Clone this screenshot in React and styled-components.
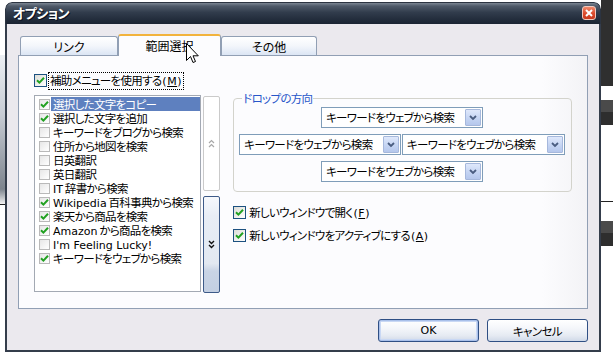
import React from "react";
import styled, { createGlobalStyle } from "styled-components";

const Global = createGlobalStyle`
  html, body { margin: 0; padding: 0; background: #fff; }
  body { font-family: "Noto Sans CJK JP", "Noto Sans", sans-serif; }
  * { box-sizing: border-box; }
`;

const FONT = `"Noto Sans CJK JP", "Noto Sans", sans-serif`;
const LATIN = `"DejaVu Sans", "Noto Sans CJK JP", sans-serif`;

const Desktop = styled.div`
  position: relative;
  width: 613px;
  height: 358px;
  overflow: hidden;
  background: #fff;
  display: flex;
  font-family: ${FONT};
  font-feature-settings: "palt";
`;

const LeftStrip = styled.div`
  width: 5px;
  display: flex;
  flex-direction: column;
`;

const Band = styled.div`
  height: ${(p) => p.h}px;
  background: ${(p) => p.bg};
  border-bottom: ${(p) => (p.line ? "1px solid #222" : "none")};
`;

const Middle = styled.div`
  flex: 1;
`;

const RightStrip = styled.div`
  width: 12px;
  display: flex;
  flex-direction: column;
`;

const Window = styled.div`
  position: absolute;
  left: 5px;
  top: 2px;
  width: 596px;
  height: 350px;
  display: flex;
  flex-direction: column;
  border-radius: 7px 7px 0 0;
  overflow: hidden;
`;

const TitleBar = styled.div`
  height: 23px;
  display: flex;
  align-items: center;
  justify-content: space-between;
  padding: 0 4px 0 7px;
  background: linear-gradient(
    #7b8592 0%,
    #4e5968 15%,
    #313c4c 45%,
    #222c3b 80%,
    #1b2433 100%
  );
  border: 1px solid #2c3441;
  border-bottom: none;
  border-radius: 7px 7px 0 0;
`;

const Title = styled.div`
  color: #fff;
  font-weight: bold;
  font-size: 13px;
  letter-spacing: -0.6px;
  text-shadow: 1px 1px 0 #0a1020;
  margin-top: -2px;
`;

const CloseBtn = styled.div`
  width: 14px;
  height: 14px;
  border-radius: 3px;
  border: 1px solid #f2c8bd;
  background: linear-gradient(#f08a6c, #dc4a2c 55%, #c83a1e);
  display: flex;
  align-items: center;
  justify-content: center;
  margin-top: -1px;
`;

const Body = styled.div`
  flex: 1;
  background: #ebe9ee;
  border: 2px solid #343d4b;
  border-top: none;
  padding: 10px 11px 8px 11px;
  display: flex;
  flex-direction: column;
`;

const TabStrip = styled.div`
  height: 21px;
  display: flex;
  align-items: flex-end;
  padding-left: 2px;
  position: relative;
  z-index: 1;
`;

const Tab = styled.div`
  width: ${(p) => p.w}px;
  height: ${(p) => (p.active ? 22 : 19)}px;
  margin-bottom: ${(p) => (p.active ? -1 : 0)}px;
  border: 1px solid #919fb4;
  border-bottom: none;
  border-top: ${(p) => (p.active ? "2px solid #f2b33d" : "1px solid #919fb4")};
  border-radius: 3px 3px 0 0;
  background: ${(p) =>
    p.active ? "#fcfcfe" : "linear-gradient(#ffffff, #f3f6fb 50%, #dbe5f4)"};
  display: flex;
  align-items: center;
  justify-content: center;
  font-size: 12px;
  color: #000;
  padding-bottom: ${(p) => (p.active ? 2 : 0)}px;
`;

const Panel = styled.div`
  height: 254px;
  border: 1px solid #919fb4;
  background: linear-gradient(90deg, #fcfcfe 92%, #f3f3f6);
  padding: 16px 15px 0 15px;
  display: flex;
  flex-direction: column;
  font-size: 11.5px;
  letter-spacing: -0.7px;
`;

const CheckLine = styled.label`
  display: flex;
  align-items: center;
  height: ${(p) => p.h || 17}px;
  color: #000;
  margin-top: ${(p) => p.mt || 0}px;
`;

const FocusText = styled.span`
  margin-left: 2px;
  padding: 0 1px;
  line-height: 15px;
  outline: ${(p) => (p.focus ? "1px dotted #000" : "none")};
`;

const Plain = styled.span`
  margin-left: 3px;
`;

const Latin = styled.span`
  font-family: ${LATIN};
  font-size: 11px;
  letter-spacing: 0;
`;

const Mnemonic = styled.span`
  font-family: ${LATIN};
  font-size: 11px;
  letter-spacing: 0.5px;
  margin-left: 1px;
  & u {
    text-decoration: underline;
  }
`;

const BoxMain = styled.span`
  width: 13px;
  height: 13px;
  border: 1px solid #1c5180;
  background: linear-gradient(135deg, #dcdcd7, #ffffff);
  display: flex;
  align-items: center;
  justify-content: center;
  flex: none;
`;

const Content = styled.div`
  margin-top: 6px;
  display: flex;
  align-items: flex-start;
`;

const ListBox = styled.div`
  width: 170px;
  height: 197px;
  border: 1px solid #a3a9b3;
  background: #fff;
  padding-top: 1px;
  display: flex;
  flex-direction: column;
`;

const ListRow = styled.div`
  height: 14px;
  display: flex;
  align-items: center;
  padding-left: 4px;
`;

const BoxSmall = styled.span`
  width: 11px;
  height: 11px;
  border: 1px solid #b9b9b9;
  background: linear-gradient(135deg, #e6e6e6, #ffffff);
  display: flex;
  align-items: center;
  justify-content: center;
  flex: none;
`;

const ItemText = styled.span`
  flex: 1;
  height: 14px;
  margin-left: 1px;
  padding-left: 2px;
  line-height: 14px;
  white-space: nowrap;
  color: ${(p) => (p.sel ? "#fff" : "#000")};
  background: ${(p) => (p.sel ? "#5e80bf" : "transparent")};
`;

const ScrollCol = styled.div`
  margin-left: 2px;
  margin-top: 1px;
  width: 17px;
  display: flex;
  flex-direction: column;
  gap: 5px;
`;

const ScrollBtn = styled.div`
  height: ${(p) => p.h}px;
  border-radius: 2px;
  border: 1px solid ${(p) => (p.pressed ? "#3d5a88" : "#cacaca")};
  background: ${(p) =>
    p.pressed
      ? "linear-gradient(#f6f8fc 0%, #e8edf5 20%, #e2e8f1 70%, #c9d4e5 78%, #c3cfe2 100%)"
      : "#fff"};
  display: flex;
  align-items: center;
  justify-content: center;
`;

const RightCol = styled.div`
  margin-left: 13px;
  width: 344px;
  display: flex;
  flex-direction: column;
`;

const Group = styled.fieldset`
  margin: -3px 0 0 0;
  height: 100px;
  border: 1px solid #d3d3cc;
  border-radius: 4px;
  padding: 3px 6px 0 5px;
  display: flex;
  flex-direction: column;
  align-items: stretch;
  gap: 6px;
`;

const Legend = styled.legend`
  margin-left: 3px;
  padding: 0 1px;
  line-height: 12px;
  color: #2756c9;
`;

const ComboRow = styled.div`
  display: flex;
  justify-content: ${(p) => (p.center ? "center" : "space-between")};
`;

const Combo = styled.div`
  width: ${(p) => p.w || 162}px;
  height: 21px;
  border: 1px solid #7f9db9;
  background: #fff;
  display: flex;
  align-items: stretch;
  padding: 1px;
`;

const ComboText = styled.span`
  flex: 1;
  line-height: 17px;
  padding-left: 3px;
  color: #000;
  white-space: nowrap;
  overflow: hidden;
`;

const ComboArrow = styled.span`
  width: 16px;
  border: 1px solid #a6b8dc;
  border-radius: 1px;
  background: linear-gradient(#dfe8fb, #c3d3f2 60%, #b5c7ec);
  display: flex;
  align-items: center;
  justify-content: center;
`;

const Footer = styled.div`
  margin-top: 10px;
  display: flex;
  justify-content: flex-end;
  gap: 8px;
`;

const Button = styled.div`
  width: ${(p) => p.w}px;
  height: 23px;
  border: 1px solid #2f4f84;
  border-radius: 3px;
  background: linear-gradient(#ffffff 0%, #f4f6fa 40%, #e5eaf2 75%, #d0d9e8 100%);
  box-shadow: ${(p) => (p.def ? "inset 0 0 0 1px #a9c0ea, inset 0 0 0 2px #c9d8f4" : "none")};
  display: flex;
  align-items: center;
  justify-content: center;
  font-size: 11.5px;
  letter-spacing: -0.6px;
  color: #000;
`;

const Cursor = styled.svg`
  position: absolute;
  left: 186px;
  top: 43px;
  z-index: 5;
`;

const Check = ({ c = "#21a121" }) => (
  <svg width="9" height="9" viewBox="0 0 9 9">
    <path d="M1 4.2 L3.4 6.6 L8 1.8" fill="none" stroke={c} strokeWidth="2" />
  </svg>
);

const items = [
  { t: "選択した文字をコピー", c: true, sel: true },
  { t: "選択した文字を追加", c: true },
  { t: "キーワードをブログから検索", c: false },
  { t: "住所から地図を検索", c: false },
  { t: "日英翻訳", c: false },
  { t: "英日翻訳", c: false },
  { t: "IT 辞書から検索", c: false, latin: "IT", rest: " 辞書から検索" },
  { t: "Wikipedia 百科事典から検索", c: true, latin: "Wikipedia", rest: " 百科事典から検索" },
  { t: "楽天から商品を検索", c: true },
  { t: "Amazon から商品を検索", c: true, latin: "Amazon", rest: " から商品を検索" },
  { t: "I'm Feeling Lucky!", c: false, latin: "I'm Feeling Lucky!", rest: "" },
  { t: "キーワードをウェブから検索", c: true },
];

const ComboBox = ({ w }) => (
  <Combo w={w}>
    <ComboText>キーワードをウェブから検索</ComboText>
    <ComboArrow>
      <svg width="8" height="6" viewBox="0 0 8 6">
        <path d="M1 1 L4 4 L7 1" fill="none" stroke="#4a5d80" strokeWidth="1.8" />
      </svg>
    </ComboArrow>
  </Combo>
);

export default function App() {
  return (
    <>
      <Global />
      <Desktop>
        <LeftStrip>
          <Band h={55} bg="#fff" />
          <Band h={150} bg="linear-gradient(#eceff3, #c7ccd4 40%, #7d848d 90%, #f2f2f2)" line />
          <Band h={152} bg="#fff" />
        </LeftStrip>
        <Middle />
        <RightStrip>
          <Band h={86} bg="#2f2f2f" />
          <Band h={14} bg="#fff" />
          <Band h={12} bg="#4a4a4a" />
          <Band h={13} bg="#2e2e2e" />
          <Band h={77} bg="#fff" line />
          <Band h={19} bg="#fff" />
          <Band h={12} bg="#4a4a4a" />
          <Band h={13} bg="#2e2e2e" />
          <Band h={112} bg="#fff" />
        </RightStrip>

        <Window>
          <TitleBar>
            <Title>オプション</Title>
            <CloseBtn>
              <svg width="8" height="8" viewBox="0 0 8 8">
                <path d="M1 1 L7 7 M7 1 L1 7" stroke="#fff" strokeWidth="2" />
              </svg>
            </CloseBtn>
          </TitleBar>
          <Body>
            <TabStrip>
              <Tab w={98}>リンク</Tab>
              <Tab w={103} active>範囲選択</Tab>
              <Tab w={96}>その他</Tab>
            </TabStrip>
            <Panel>
              <CheckLine>
                <BoxMain>
                  <Check />
                </BoxMain>
                <FocusText focus>
                  補助メニューを使用する<Mnemonic>(<u>M</u>)</Mnemonic>
                </FocusText>
              </CheckLine>
              <Content>
                <ListBox>
                  {items.map((it, i) => (
                    <ListRow key={i}>
                      <BoxSmall>{it.c && <Check />}</BoxSmall>
                      <ItemText sel={it.sel}>
                        {it.latin !== undefined ? (
                          <>
                            <Latin>{it.latin}</Latin>
                            {it.rest}
                          </>
                        ) : (
                          it.t
                        )}
                      </ItemText>
                    </ListRow>
                  ))}
                </ListBox>
                <ScrollCol>
                  <ScrollBtn h={95}>
                    <svg width="7" height="9" viewBox="0 0 7 9">
                      <path d="M1 4 L3.5 1.5 L6 4 M1 8 L3.5 5.5 L6 8" fill="none" stroke="#a8a8a8" strokeWidth="1.2" />
                    </svg>
                  </ScrollBtn>
                  <ScrollBtn h={97} pressed>
                    <svg width="7" height="9" viewBox="0 0 7 9">
                      <path d="M1 1 L3.5 3.5 L6 1 M1 5 L3.5 7.5 L6 5" fill="none" stroke="#111" strokeWidth="1.4" />
                    </svg>
                  </ScrollBtn>
                </ScrollCol>
                <RightCol>
                  <Group>
                    <Legend>ドロップの方向</Legend>
                    <ComboRow center>
                      <ComboBox />
                    </ComboRow>
                    <ComboRow>
                      <ComboBox w={162} />
                      <ComboBox w={163} />
                    </ComboRow>
                    <ComboRow center>
                      <ComboBox />
                    </ComboRow>
                  </Group>
                  <CheckLine mt={11} h={18}>
                    <BoxMain>
                      <Check />
                    </BoxMain>
                    <Plain>
                      新しいウィンドウで開く<Mnemonic>(<u>F</u>)</Mnemonic>
                    </Plain>
                  </CheckLine>
                  <CheckLine mt={5} h={18}>
                    <BoxMain>
                      <Check />
                    </BoxMain>
                    <Plain>
                      新しいウィンドウをアクティブにする<Mnemonic>(<u>A</u>)</Mnemonic>
                    </Plain>
                  </CheckLine>
                </RightCol>
              </Content>
            </Panel>
            <Footer>
              <Button w={101} def>
                <Latin>OK</Latin>
              </Button>
              <Button w={101}>キャンセル</Button>
            </Footer>
          </Body>
        </Window>

        <Cursor width="13" height="22" viewBox="0 0 13 22">
          <path
            d="M0.5 0.5 L0.5 17.5 L4.5 13.5 L7 19.5 L9.5 18.5 L7 12.8 L12.3 12.8 Z"
            fill="#fff"
            stroke="#000"
            strokeWidth="1"
          />
        </Cursor>
      </Desktop>
    </>
  );
}
